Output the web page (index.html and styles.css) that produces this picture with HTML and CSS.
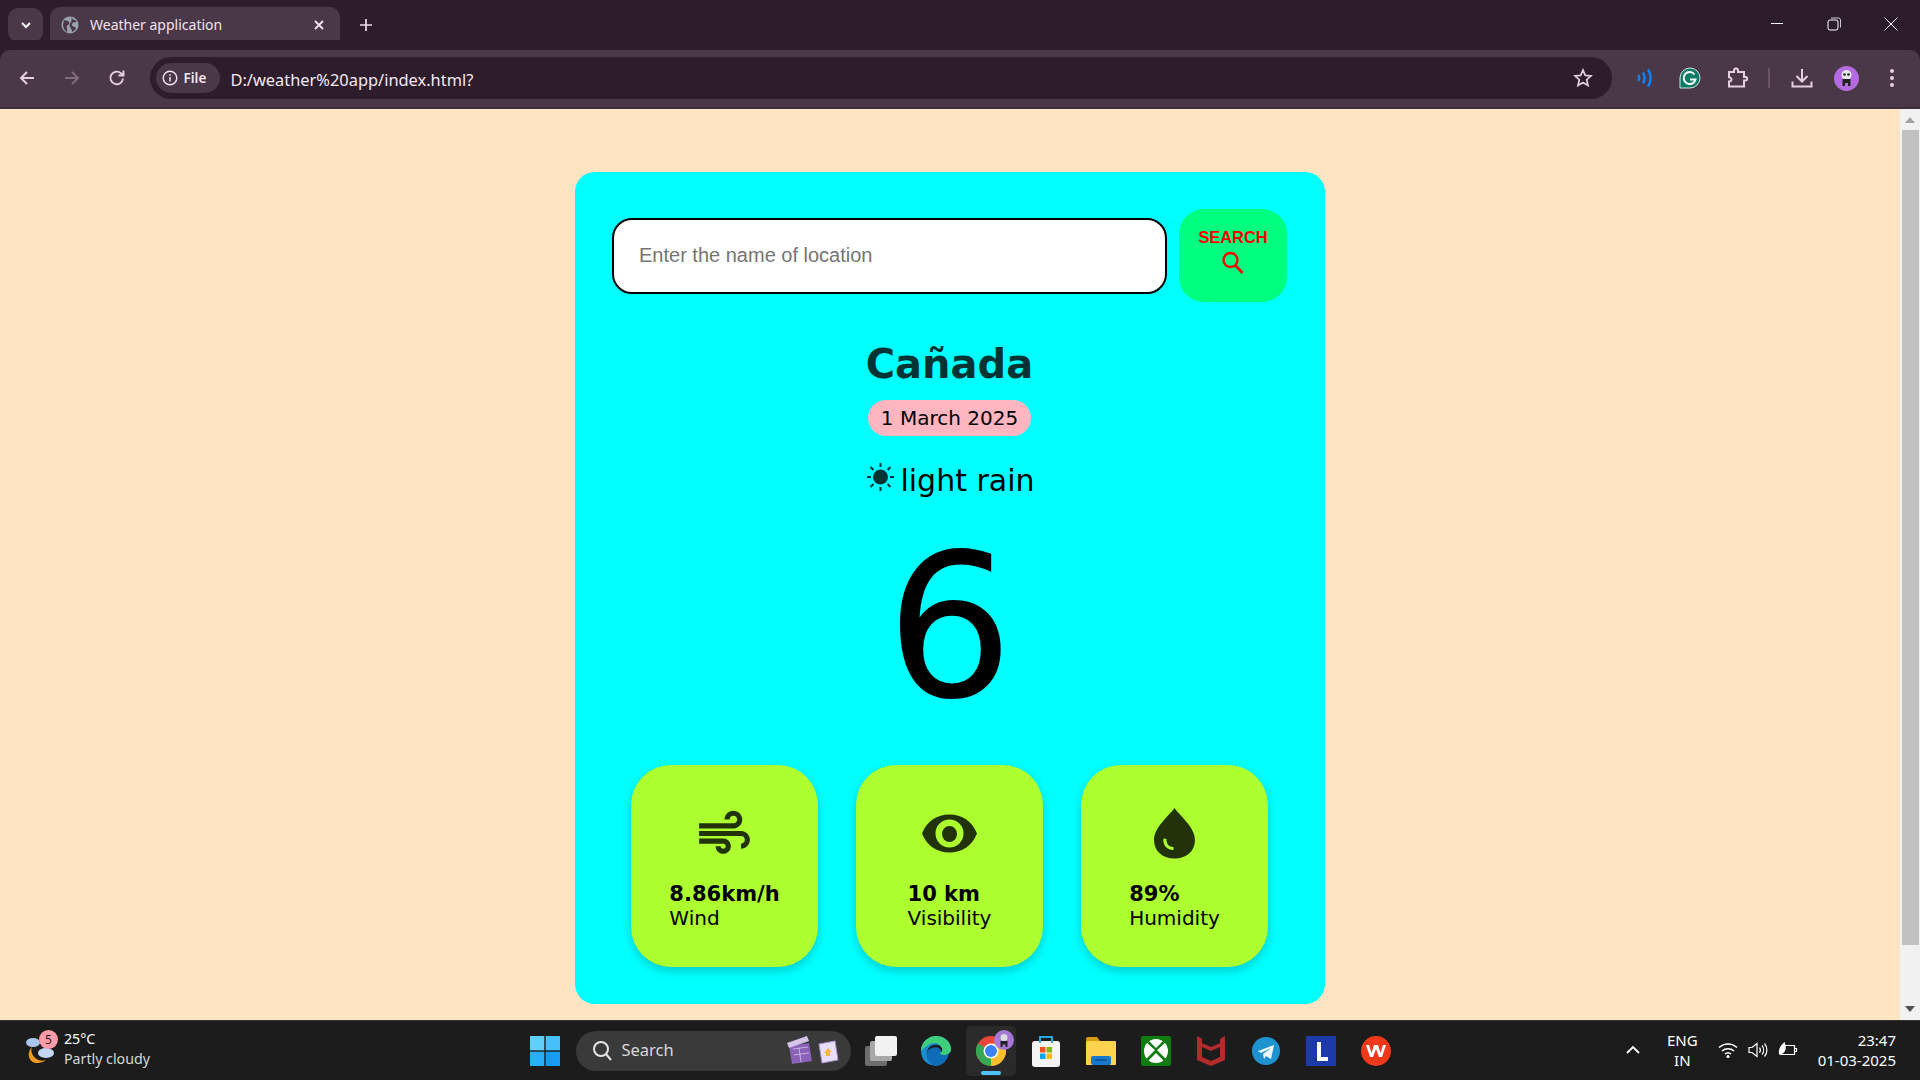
FILE: index.html
```html
<!DOCTYPE html>
<html lang="en">
<head>
<meta charset="utf-8">
<title>Weather application</title>
<link rel="stylesheet" href="styles.css">
</head>
<body>
<div class="tabstrip">
  <div class="tab-list-btn"><svg width="16" height="16" viewBox="0 0 16 16"><path d="M4 6l4 4 4-4" fill="none" stroke="#fff" stroke-width="2"/></svg></div>
  <div class="tab">
    <svg class="tab-globe" width="18" height="18" viewBox="0 0 18 18"><circle cx="9" cy="9" r="8.5" fill="#9aa4ad"/><path d="M3 4c2 1 4 0 5 2s-1 3-2 4 1 3 0 6c-2-1-4-4-4-7zM11 1c0 2 1 3 3 3l2 2c-2 0-4 0-5 2s2 3 3 3 1 2 0 3-2 1-3 2c0-2-1-4-2-5s0-4 1-5 0-3 1-5z" fill="#4a3848"/></svg>
    <span class="tab-title">Weather application</span>
    <svg class="tab-close" width="12" height="12" viewBox="0 0 12 12"><path d="M2 2l8 8M10 2l-8 8" stroke="#f3e4ee" stroke-width="1.8"/></svg>
  </div>
  <svg class="new-tab" width="14" height="14" viewBox="0 0 14 14"><path d="M7 1v12M1 7h12" stroke="#f0dcea" stroke-width="1.7"/></svg>
  <div class="win-controls">
    <svg width="14" height="14" viewBox="0 0 14 14"><path d="M1 6.5h12" stroke="#fff" stroke-width="1"/></svg>
    <svg width="14" height="14" viewBox="0 0 14 14"><rect x="1" y="3" width="10" height="10" rx="2" fill="none" stroke="#fff"/><path d="M4 1h7.500a2 2 0 0 1 2 2v7.500" fill="none" stroke="#ccc"/></svg>
    <svg width="14" height="14" viewBox="0 0 14 14"><path d="M.5.5l13 13M13.500.5l-13 13" stroke="#fff" stroke-width="1"/></svg>
  </div>
</div>
<div class="toolbar">
  <svg class="tool-nav" width="20" height="20" viewBox="0 0 20 20"><path d="M17 10H4M10 4l-6 6 6 6" fill="none" stroke="#e6cfe0" stroke-width="2"/></svg>
  <svg class="tool-nav" width="20" height="20" viewBox="0 0 20 20"><path d="M3 10h13M10 4l6 6-6 6" fill="none" stroke="#7f6b7b" stroke-width="2"/></svg>
  <svg class="tool-nav" width="20" height="20" viewBox="0 0 20 20"><path d="M16 10.500a6.300 6.300 0 1 1-2-5.200L16 7M16.500 2.500V7.500h-5" fill="none" stroke="#e6cfe0" stroke-width="1.900"/></svg>
  <div class="omnibox">
    <div class="file-chip">
      <svg width="16" height="16" viewBox="0 0 16 16"><circle cx="8" cy="8" r="6.800" fill="none" stroke="#f3e4ee" stroke-width="1.400"/><path d="M8 7v4.500M8 4.200v1.500" stroke="#f3e4ee" stroke-width="1.500"/></svg>
      <span>File</span>
    </div>
    <span class="url">D:/weather%20app/index.html?</span>
    <svg class="star" width="20" height="20" viewBox="0 0 20 20"><path d="M10 2l2.300 5.400 5.700.5-4.300 3.800 1.300 5.700-5-3-5 3 1.300-5.700L2 7.900l5.700-.5z" fill="none" stroke="#e6cfe0" stroke-width="1.700"/></svg>
  </div>
  <div class="tool-icons">
    <svg class="ti" width="20" height="20" viewBox="0 0 20 20"><path d="M3.500 7c1 2 1 4 0 6M8 4.500c2 3.500 2 7.500 0 11M13 1.500c3.500 5 3.500 12 0 17" fill="none" stroke="#0a84ff" stroke-width="2.400"/></svg>
    <svg class="ti" width="22" height="22" viewBox="0 0 22 22"><path d="M11 1a10 10 0 1 1 0 20H1V11A10 10 0 0 1 11 1z" fill="#0d7a66" stroke="#cfe4dd" stroke-width="1"/><path d="M15.500 7.500a6 6 0 1 0 1 5H11" fill="none" stroke="#fff" stroke-width="2"/></svg>
    <svg class="ti" width="22" height="22" viewBox="0 0 22 22"><path d="M3 5h5V3.500a2 2 0 0 1 4 0V5h6v5h1.500a1.800 1.800 0 0 1 0 3.600H18v6H3v-5.100c2 0 2.500-1.200 2.500-2s-.8-2.200-2.500-2.200z" fill="none" stroke="#e6cfe0" stroke-width="2"/></svg>
    <span class="tool-sep"></span>
    <svg class="ti" width="22" height="22" viewBox="0 0 22 22"><path d="M11 2v12M5.500 9l5.500 5.500L16.500 9M1.500 14.500V19.500h19V14.500" fill="none" stroke="#e6cfe0" stroke-width="2"/></svg>
    <svg class="ti" width="25" height="25" viewBox="0 0 25 25"><circle cx="12.500" cy="12.500" r="12.500" fill="#b56be0"/><circle cx="12.500" cy="9" r="5" fill="#e8e8e8"/><circle cx="10.500" cy="8.500" r="1.300" fill="#222"/><circle cx="14.500" cy="8.500" r="1.300" fill="#222"/><path d="M8.500 13h8v7h-2.500v-3h-3v3H8.500z" fill="#222"/></svg>
    <svg class="ti" width="6" height="22" viewBox="0 0 6 22"><circle cx="3" cy="4" r="2" fill="#e6cfe0"/><circle cx="3" cy="11" r="2" fill="#e6cfe0"/><circle cx="3" cy="18" r="2" fill="#e6cfe0"/></svg>
  </div>
</div>
<div class="viewport">
  <main class="page">
    <section class="card">
      <form class="search-row">
        <input class="search-input" type="text" placeholder="Enter the name of location">
        <button class="search-btn" type="button">
          <span>SEARCH</span>
          <svg width="26" height="26" viewBox="0 0 26 26"><circle cx="10.500" cy="10" r="7" fill="none" stroke="#f00" stroke-width="2.300"/><path d="M15.500 15.500l7 7.500" stroke="#f00" stroke-width="2.600"/></svg>
        </button>
      </form>
      <h1 class="city">Cañada</h1>
      <p class="date">1 March 2025</p>
      <p class="desc">
        <svg class="sun" width="27" height="28" viewBox="0 0 27 28"><circle cx="13.500" cy="14" r="7.500" fill="#003333"/><path d="M13.500 0v4M13.500 24v4M0 14h4M23 14h4M3.500 4l3 3M20.500 21l3 3M3.500 24l3-3M20.500 7l3-3" stroke="#003333" stroke-width="2"/></svg>
        <span>light rain</span>
      </p>
      <p class="temp">6</p>
      <div class="stats">
        <div class="stat">
          <svg class="stat-icon" viewBox="0 0 24 24"><path d="M14.500 17c0 1.650-1.350 3-3 3s-3-1.350-3-3h2c0 .55.45 1 1 1s1-.45 1-1-.45-1-1-1H2v-2h9.500c1.650 0 3 1.350 3 3zM19 6.500C19 4.570 17.430 3 15.500 3S12 4.570 12 6.500h2c0-.83.67-1.500 1.500-1.500s1.500.67 1.500 1.500S16.330 8 15.500 8H2v2h13.500c1.930 0 3.500-1.570 3.500-3.500zm-.5 4.500H2v2h16.500c.83 0 1.500.67 1.500 1.500s-.67 1.500-1.500 1.500v2c1.930 0 3.500-1.570 3.500-3.500S20.430 11 18.500 11z"/></svg>
          <div class="stat-text"><b>8.86km/h</b><span>Wind</span></div>
        </div>
        <div class="stat">
          <svg class="stat-icon" viewBox="0 0 61 61"><path fill-rule="evenodd" d="M3 30.500C8 18 18 11.500 30.500 11.500S53 18 58 30.500C53 43 43 49.500 30.500 49.500S8 43 3 30.500zM30.500 16.500a14 14 0 1 0 0 28 14 14 0 0 0 0-28zm0 6.500a7.500 8 0 1 1 0 16 7.500 8 0 0 1 0-16z"/></svg>
          <div class="stat-text"><b>10 km</b><span>Visibility</span></div>
        </div>
        <div class="stat">
          <svg class="stat-icon" viewBox="0 0 61 61"><path fill-rule="evenodd" d="M30.500 5C36 13 51 24 51 37c0 11.500-9 18.500-20.500 18.500S10 48.500 10 37C10 24 25 13 30.500 5zM19.500 35.500c-1 6 3 11.500 10 11.500v-3c-4.500 0-7.500-3.500-7-8z"/></svg>
          <div class="stat-text"><b>89%</b><span>Humidity</span></div>
        </div>
      </div>
    </section>
  </main>
  <div class="scrollbar">
    <span class="arrow-up"></span>
    <span class="thumb"></span>
    <span class="arrow-down"></span>
  </div>
</div>
<footer class="taskbar">
  <div class="weather">
    <div class="weather-icon">
      <svg width="32" height="32" viewBox="0 0 32 32"><path d="M8 13a11 11 0 0 0 14 14 11 11 0 0 1-9 3C6 30 2 22 7 15z" fill="#f29a1f"/><ellipse cx="9" cy="9.500" rx="7" ry="4.500" fill="#a9c6ee"/><ellipse cx="22" cy="20" rx="8" ry="5" fill="#c4d8f5"/></svg>
      <span class="weather-badge">5</span>
    </div>
    <div class="weather-text"><span>25°C</span><span class="weather-sub">Partly cloudy</span></div>
  </div>
  <div class="task-btn">
    <svg width="30" height="30" viewBox="0 0 30 30"><rect x="0" y="0" width="14.300" height="14.300" fill="#5fd0fb"/><rect x="15.700" y="0" width="14.300" height="14.300" fill="#45c0fa"/><rect x="0" y="15.700" width="14.300" height="14.300" fill="#29aef8"/><rect x="15.700" y="15.700" width="14.300" height="14.300" fill="#149cf6"/></svg>
  </div>
  <div class="task-search">
    <svg width="22" height="22" viewBox="0 0 22 22"><circle cx="10" cy="10" r="7" fill="none" stroke="#e5e5e5" stroke-width="2"/><path d="M15 15l5 6" stroke="#e5e5e5" stroke-width="2"/></svg>
    <span>Search</span>
    <svg class="search-deco" width="56" height="30" viewBox="0 0 56 30"><path d="M4 11l20-3 3 18-20 3z" fill="#8a63b8"/><path d="M2 8l20-7 2 5-20 7z" fill="#d6c5ea"/><path d="M8 14l15-2M9 20l15-2M14 13l2 14" stroke="#c9b4e3"/><path d="M34 9l16-3 3 19-16 3z" fill="#e9defa" stroke="#a98fcf"/><path d="M43 13l4 4h-2v4h-4v-3h-2z" fill="#f4b63f"/></svg>
  </div>
  <div class="task-btn">
    <svg width="32" height="30" viewBox="0 0 32 30"><rect x="0" y="10" width="22" height="20" rx="2" fill="#6d6d6d"/><rect x="5" y="5" width="22" height="20" rx="2" fill="#a8a8a8"/><rect x="10" y="0" width="22" height="20" rx="2" fill="#f2f2f2"/></svg>
  </div>
  <div class="task-btn">
    <svg width="30" height="30" viewBox="0 0 30 30"><path d="M15 0c8.500 0 15 6 15 13 0 4-3.500 6-7 6-3 0-5-1-5-2.500 3 0 4-2 3-4.500-1.500-3-5-4-8.500-3C8 10 5 14 6 20c1 4 4 8 9 9.500C7 30 0 24 0 15 0 7 6.500 0 15 0z" fill="#1b8ed1"/><path d="M15 0c8.500 0 15 6 15 13 0 4-3.500 6-7 6-3 0-5-1-5-2.500 3 0 4-2 3-4.500C19 8 15 6 10.500 7.500 5 9.500 2 13 0 15 0 7 6.500 0 15 0z" fill="#3fcf7a"/><path d="M11 12c4-2 9 0 9 4-2 1-2 3 3 3 2 0 4-.5 5-2-1 7-7 13-13 13-5 0-9-6-9-11s2-6 5-7z" fill="#0f6cb8"/></svg>
  </div>
  <div class="task-btn task-active">
    <svg width="30" height="30" viewBox="0 0 30 30"><circle cx="15" cy="15" r="15" fill="#e8453c"/><path d="M15 15L2 22.500A15 15 0 0 0 15 30z" fill="#34a853"/><path d="M15 15v15A15 15 0 0 0 28 7.500H15z" fill="#fbc02d"/><path d="M15 15L2 22.500A15 15 0 0 1 2 7.500z" fill="#34a853"/><circle cx="15" cy="15" r="7.500" fill="#fff"/><circle cx="15" cy="15" r="6" fill="#3b82f6"/></svg>
    <svg class="chrome-badge" width="20" height="20" viewBox="0 0 20 20"><circle cx="10" cy="10" r="10" fill="#a678d8"/><circle cx="10" cy="7.500" r="3.500" fill="#ddd"/><path d="M6.500 11h7v6h-2v-2.500h-3V17h-2z" fill="#222"/></svg>
    <span class="active-bar"></span>
  </div>
  <div class="task-btn">
    <svg width="30" height="32" viewBox="0 0 30 32"><rect x="1" y="6" width="28" height="26" rx="3" fill="#f4f4f4"/><path d="M9 8V2h12v6" fill="none" stroke="#2aa7e0" stroke-width="2"/><rect x="9" y="12" width="5.500" height="5.500" fill="#f25022"/><rect x="15.500" y="12" width="5.500" height="5.500" fill="#7fba00"/><rect x="9" y="18.500" width="5.500" height="5.500" fill="#00a4ef"/><rect x="15.500" y="18.500" width="5.500" height="5.500" fill="#ffb900"/></svg>
  </div>
  <div class="task-btn">
    <svg width="30" height="28" viewBox="0 0 30 28"><path d="M0 2a2 2 0 0 1 2-2h9l3 4h-14z" fill="#d69d12"/><rect x="0" y="4" width="30" height="24" rx="1" fill="#fbd34c"/><rect x="5" y="19" width="20" height="9" rx="2" fill="#1679cf"/><path d="M9 23h12" stroke="#0b4f92" stroke-width="1.500"/></svg>
  </div>
  <div class="task-btn">
    <svg width="30" height="30" viewBox="0 0 30 30"><rect width="30" height="30" rx="2" fill="#107c10"/><circle cx="15" cy="15" r="12" fill="#fff"/><path d="M8 5l7 7 7-7 3 1-10 9-10-9zM4 24l11-11 11 11-2 2-9-9-9 9z" fill="#107c10"/></svg>
  </div>
  <div class="task-btn">
    <svg width="28" height="30" viewBox="0 0 28 30"><path d="M0 5l14 6 14-6v19l-14 6-14-6z" fill="#b52a2a"/><path d="M5 11l9 4 9-4v10l-9 4-9-4z" fill="#1c1c1c"/><path d="M0 0l5 3v10L0 9zM28 0l-5 3v10l5-4z" fill="#b52a2a"/></svg>
  </div>
  <div class="task-btn">
    <svg width="28" height="28" viewBox="0 0 28 28"><circle cx="14" cy="14" r="14" fill="#1f93cf"/><path d="M6 14l16-6-3 14-5-3-2 3-1-5 8-6-10 5z" fill="#eef7fc"/></svg>
  </div>
  <div class="task-btn">
    <svg width="30" height="30" viewBox="0 0 30 30"><rect width="30" height="30" fill="#1c3aa9"/><path d="M11 6h4v15h7v4H11z" fill="#fff"/><path d="M8 25l3-4v4z" fill="#16307f"/></svg>
  </div>
  <div class="task-btn">
    <svg width="30" height="30" viewBox="0 0 30 30"><circle cx="15" cy="15" r="15" fill="#f0391a"/><path d="M5 9l4 12h3l3-8 3 8h3l4-12h-3l-2.500 8L17 9h-4l-2.500 8L8 9z" fill="#fff"/></svg>
  </div>
  <div class="tray">
    <svg width="14" height="10" viewBox="0 0 14 10"><path d="M1 8l6-6 6 6" fill="none" stroke="#fff" stroke-width="1.800"/></svg>
    <div class="lang"><span>ENG</span><span>IN</span></div>
    <div class="tray-icons">
      <svg width="20" height="18" viewBox="0 0 20 18"><path d="M1 6.500a13 13 0 0 1 18 0M4 10a9 9 0 0 1 12 0M7 13a4.500 4.500 0 0 1 6 0" fill="none" stroke="#fff" stroke-width="1.500"/><circle cx="10" cy="15.500" r="1.600" fill="#fff"/></svg>
      <svg width="20" height="18" viewBox="0 0 20 18"><path d="M1 6.500h3L9 2.500v13l-5-4H1z" fill="none" stroke="#fff" stroke-width="1.200"/><path d="M11.500 6.500a4 4 0 0 1 0 5M14 4.500a7 7 0 0 1 0 9M16.500 2.500a10 10 0 0 1 0 13" fill="none" stroke="#fff" stroke-width="1.200"/></svg>
      <svg width="20" height="18" viewBox="0 0 20 18"><path d="M7 4.500h9.500v9H1.500M16.500 7.500h2v3h-2" fill="none" stroke="#fff" stroke-width="1.200"/><path d="M1 13c-1-5 2-9 5.500-12C8 5 9 10 4 13z" fill="#fff"/></svg>
    </div>
    <div class="clock"><span>23:47</span><span>01-03-2025</span></div>
  </div>
</footer>
</body>
</html>
```

FILE: styles.css
```css
* { box-sizing: border-box; }
html, body { margin: 0; height: 100%; }
body {
  display: flex;
  flex-direction: column;
  height: 100vh;
  overflow: hidden;
  font-family: "DejaVu Sans", sans-serif;
  background: #ffe4c4;
}

/* browser chrome */
.tabstrip {
  flex: 0 0 50px;
  display: flex;
  align-items: flex-end;
  background: #2c1c2c;
  padding-left: 8px;
  font-family: "Noto Sans", sans-serif;
}
.tab-list-btn {
  width: 35px;
  height: 34px;
  margin-bottom: 8px;
  border-radius: 10px;
  background: #4a3848;
  display: flex;
  align-items: center;
  justify-content: center;
}
.tab {
  width: 290px;
  height: 43px;
  margin-left: 7px;
  padding: 0 15px 8px 11px;
  border-radius: 10px 10px 0 0;
  background: #4a3848;
  display: flex;
  align-items: center;
  color: #f0e2ec;
  font-size: 14px;
}
.tab-title { margin-left: 11px; flex: 1; }
.new-tab { margin: 0 0 18px 19px; }
.win-controls {
  margin-left: auto;
  height: 100%;
  padding: 0 22px 2px 0;
  display: flex;
  align-items: center;
  gap: 43px;
}
.toolbar {
  flex: 0 0 59px;
  display: flex;
  align-items: center;
  background: #4a3848;
  border-bottom: 2px solid #3f2f3e;
  border-radius: 10px 10px 0 0;
  padding: 0 0 1px 17px;
  box-shadow: 0 -10px 0 #2c1c2c;
}
.tool-nav { margin-right: 25px; flex: none; }
.tool-nav:nth-child(3) { margin-right: 22.500px; }
.omnibox {
  width: 1462px;
  height: 42px;
  border-radius: 21px;
  background: #2c1c2c;
  display: flex;
  align-items: center;
  padding: 0 4px 0 6px;
  font-family: "Noto Sans", sans-serif;
}
.file-chip {
  width: 64px;
  height: 30px;
  border-radius: 15px;
  background: #4a3848;
  display: flex;
  align-items: center;
  gap: 6px;
  padding-left: 6px;
  color: #f3e4ee;
  font-size: 13.500px;
  font-weight: 600;
}
.url { margin-left: 11px; padding-top: 3px; font-size: 16.400px; color: #f5e9f1; }
.star { margin-left: auto; margin-right: 15px; }
.tool-icons { flex: 1; display: flex; align-items: center; padding-left: 23px; }
.ti { flex: none; }
.tool-icons > :nth-child(1) { margin-right: 24px; }
.tool-icons > :nth-child(2) { margin-right: 25px; }
.tool-icons > :nth-child(3) { margin-right: 20px; }
.tool-sep { width: 2px; height: 20px; background: #6a5566; margin-right: 21px; }
.tool-icons > :nth-child(5) { margin-right: 21.500px; }
.tool-icons > :nth-child(6) { margin-right: 29.500px; }

/* page */
.viewport { flex: 1; min-height: 0; display: flex; }
.page {
  flex: 1;
  min-width: 0;
  padding-top: 63px;
  overflow: hidden;
  background: #ffe4c4;
}
.scrollbar {
  flex: 0 0 20px;
  background: #f1f1f1;
  display: flex;
  flex-direction: column;
  align-items: center;
}
.arrow-up {
  margin-top: 8px;
  border: 5px solid transparent;
  border-top: 0;
  border-bottom: 6px solid #a3a3a3;
}
.thumb { width: 17px; height: 815px; margin-top: 7px; background: #c1c1c1; }
.arrow-down {
  margin-top: 61px;
  border: 5px solid transparent;
  border-bottom: 0;
  border-top: 6px solid #505050;
}

/* weather card */
.card {
  width: 750px;
  height: 832px;
  margin: 0 auto;
  padding: 37px 1px 0 0;
  border-radius: 20px;
  background: #0ff;
  display: flex;
  flex-direction: column;
  align-items: center;
}
.search-row {
  width: 675px;
  height: 93px;
  display: flex;
  align-items: center;
  justify-content: space-between;
}
.search-input {
  width: 555px;
  height: 76px;
  padding: 0 25px;
  border: 2.500px solid #000;
  border-radius: 20px;
  background: #fff;
  outline: 0;
  font: 20px "Liberation Sans", sans-serif;
}
.search-input::placeholder { color: #757575; }
.search-btn {
  width: 108px;
  height: 93px;
  padding: 0 0 8.500px;
  border: 0;
  border-radius: 25px;
  background: #00ff7f;
  color: #f00;
  font: bold 16.400px/20px "Liberation Sans", sans-serif;
  display: flex;
  flex-direction: column;
  align-items: center;
  justify-content: center;
}
.search-btn svg { margin-top: 3.500px; }
.city {
  margin: 38px 0 0;
  font-size: 40px;
  font-weight: bold;
  line-height: 48px;
  color: #003333;
}
.date {
  margin: 12px 0 0;
  height: 36px;
  padding: 1px 13px 0;
  border-radius: 18px;
  background: #ffb6c1;
  font-size: 20px;
  line-height: 35px;
}
.desc {
  margin: 25px 0 0;
  height: 40px;
  padding-left: 2.500px;
  display: flex;
  align-items: center;
  gap: 6.500px;
  font-size: 30px;
  line-height: 40px;
}
.sun { flex: none; margin-top: -8px; }
.temp {
  margin: 26px 0 0;
  font-size: 200px;
  line-height: 200px;
}
.stats {
  margin-top: 38px;
  display: flex;
  gap: 38px;
}
.stat {
  width: 187px;
  height: 202px;
  padding-top: 38px;
  border-radius: 40px;
  background: #adff2f;
  box-shadow: 0 4px 10px rgba(0, 0, 0, .2);
  display: flex;
  flex-direction: column;
  align-items: center;
}
.stat-icon { width: 61px; height: 61px; fill: #233309; flex: none; }
.stat-text {
  margin-top: 18px;
  display: flex;
  flex-direction: column;
  font-size: 20px;
  line-height: 24px;
}
.stat-text b { font-size: 21px; line-height: 24px; }

/* taskbar */
.taskbar {
  flex: 0 0 60px;
  display: flex;
  align-items: center;
  background: #1c1c1c;
  border-top: 1px solid #333;
  color: #fff;
  font-family: "Noto Sans", sans-serif;
}
.weather {
  width: 517px;
  display: flex;
  align-items: center;
  padding: 0 0 3px 24px;
}
.weather-icon { position: relative; width: 40px; height: 40px; display: flex; align-items: center; }
.weather-badge {
  position: absolute;
  left: 15px;
  top: 1px;
  width: 19px;
  height: 19px;
  border-radius: 50%;
  background: #ff9aa8;
  color: #1c1c1c;
  font-size: 12px;
  line-height: 19px;
  text-align: center;
}
.weather-text {
  display: flex;
  flex-direction: column;
  font-size: 14.200px;
  line-height: 20px;
  color: #fff;
}
.weather-sub { color: #d8d8d8; }
.task-btn {
  position: relative;
  width: 55px;
  height: 50px;
  flex: none;
  display: flex;
  align-items: center;
  justify-content: center;
}
.task-active { background: #2a2a2a; border-radius: 5px; width: 50px; margin: 0 2.500px; }
.chrome-badge { position: absolute; left: 28px; top: 4px; }
.active-bar {
  position: absolute;
  left: 15px;
  bottom: 1px;
  width: 20px;
  height: 4px;
  border-radius: 2px;
  background: #4cc2ff;
}
.task-search {
  width: 275px;
  height: 40px;
  margin: 0 2.500px 0 3.500px;
  flex: none;
  border-radius: 20px;
  background: #3a3a3a;
  display: flex;
  align-items: center;
  padding: 0 10px 2px 15px;
  gap: 9px;
  font-size: 16.500px;
  color: #d8d8d8;
}
.search-deco { margin-left: auto; }
.tray {
  flex: 1;
  display: flex;
  align-items: center;
  justify-content: flex-end;
  padding: 0 24px 2px 0;
  font-size: 15px;
  line-height: 20px;
}
.lang { display: flex; flex-direction: column; align-items: center; margin: 0 20px 0 27px; }
.tray-icons { display: flex; gap: 10px; }
.clock { display: flex; flex-direction: column; align-items: flex-end; margin-left: 20px; }
```
